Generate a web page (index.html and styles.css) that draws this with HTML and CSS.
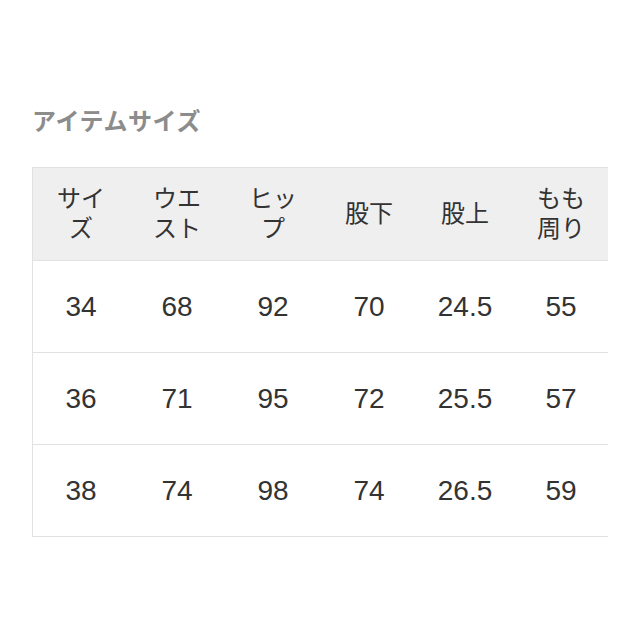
FILE: index.html
```html
<!DOCTYPE html>
<html lang="ja">
<head>
<meta charset="utf-8">
<link rel="stylesheet" href="styles.css">
</head>
<body>
<div class="page">
  <h2 class="title">アイテムサイズ</h2>
  <div class="table-wrap">
    <table class="size-table">
      <thead>
        <tr>
          <th>サイズ</th><th>ウエスト</th><th>ヒップ</th><th>股下</th><th>股上</th><th>もも周り</th>
        </tr>
      </thead>
      <tbody>
        <tr><td>34</td><td>68</td><td>92</td><td>70</td><td>24.5</td><td>55</td></tr>
        <tr><td>36</td><td>71</td><td>95</td><td>72</td><td>25.5</td><td>57</td></tr>
        <tr><td>38</td><td>74</td><td>98</td><td>74</td><td>26.5</td><td>59</td></tr>
      </tbody>
    </table>
  </div>
</div>
</body>
</html>
```
FILE: styles.css
```css
html, body {
  margin: 0;
  padding: 0;
  background: #ffffff;
}
body {
  font-family: "Liberation Sans", "Noto Sans CJK JP", sans-serif;
  color: #333333;
}
.page {
  padding: 108px 0 0 32px;
}
.title {
  margin: 0;
  font-size: 24px;
  line-height: 28px;
  font-weight: bold;
  letter-spacing: 0.6px;
  color: #8c8c8c;
}
.table-wrap {
  margin-top: 31px;
  width: 576px;
  overflow: hidden;
}
.size-table {
  border-collapse: separate;
  border-spacing: 0;
  table-layout: fixed;
  width: 576px;
  border-top: 1px solid #e2e2e2;
  border-left: 1px solid #e2e2e2;
}
.size-table th,
.size-table td {
  box-sizing: border-box;
  width: 96px;
  padding: 0 16px;
  text-align: center;
  vertical-align: middle;
  border-bottom: 1px solid #e2e2e2;
}
.size-table th {
  height: 93px;
  background: #efefef;
  font-size: 24px;
  line-height: 30px;
  font-weight: normal;
  color: #333333;
}
.size-table td {
  height: 92px;
  font-size: 28px;
  line-height: 32px;
  color: #333333;
}
```
